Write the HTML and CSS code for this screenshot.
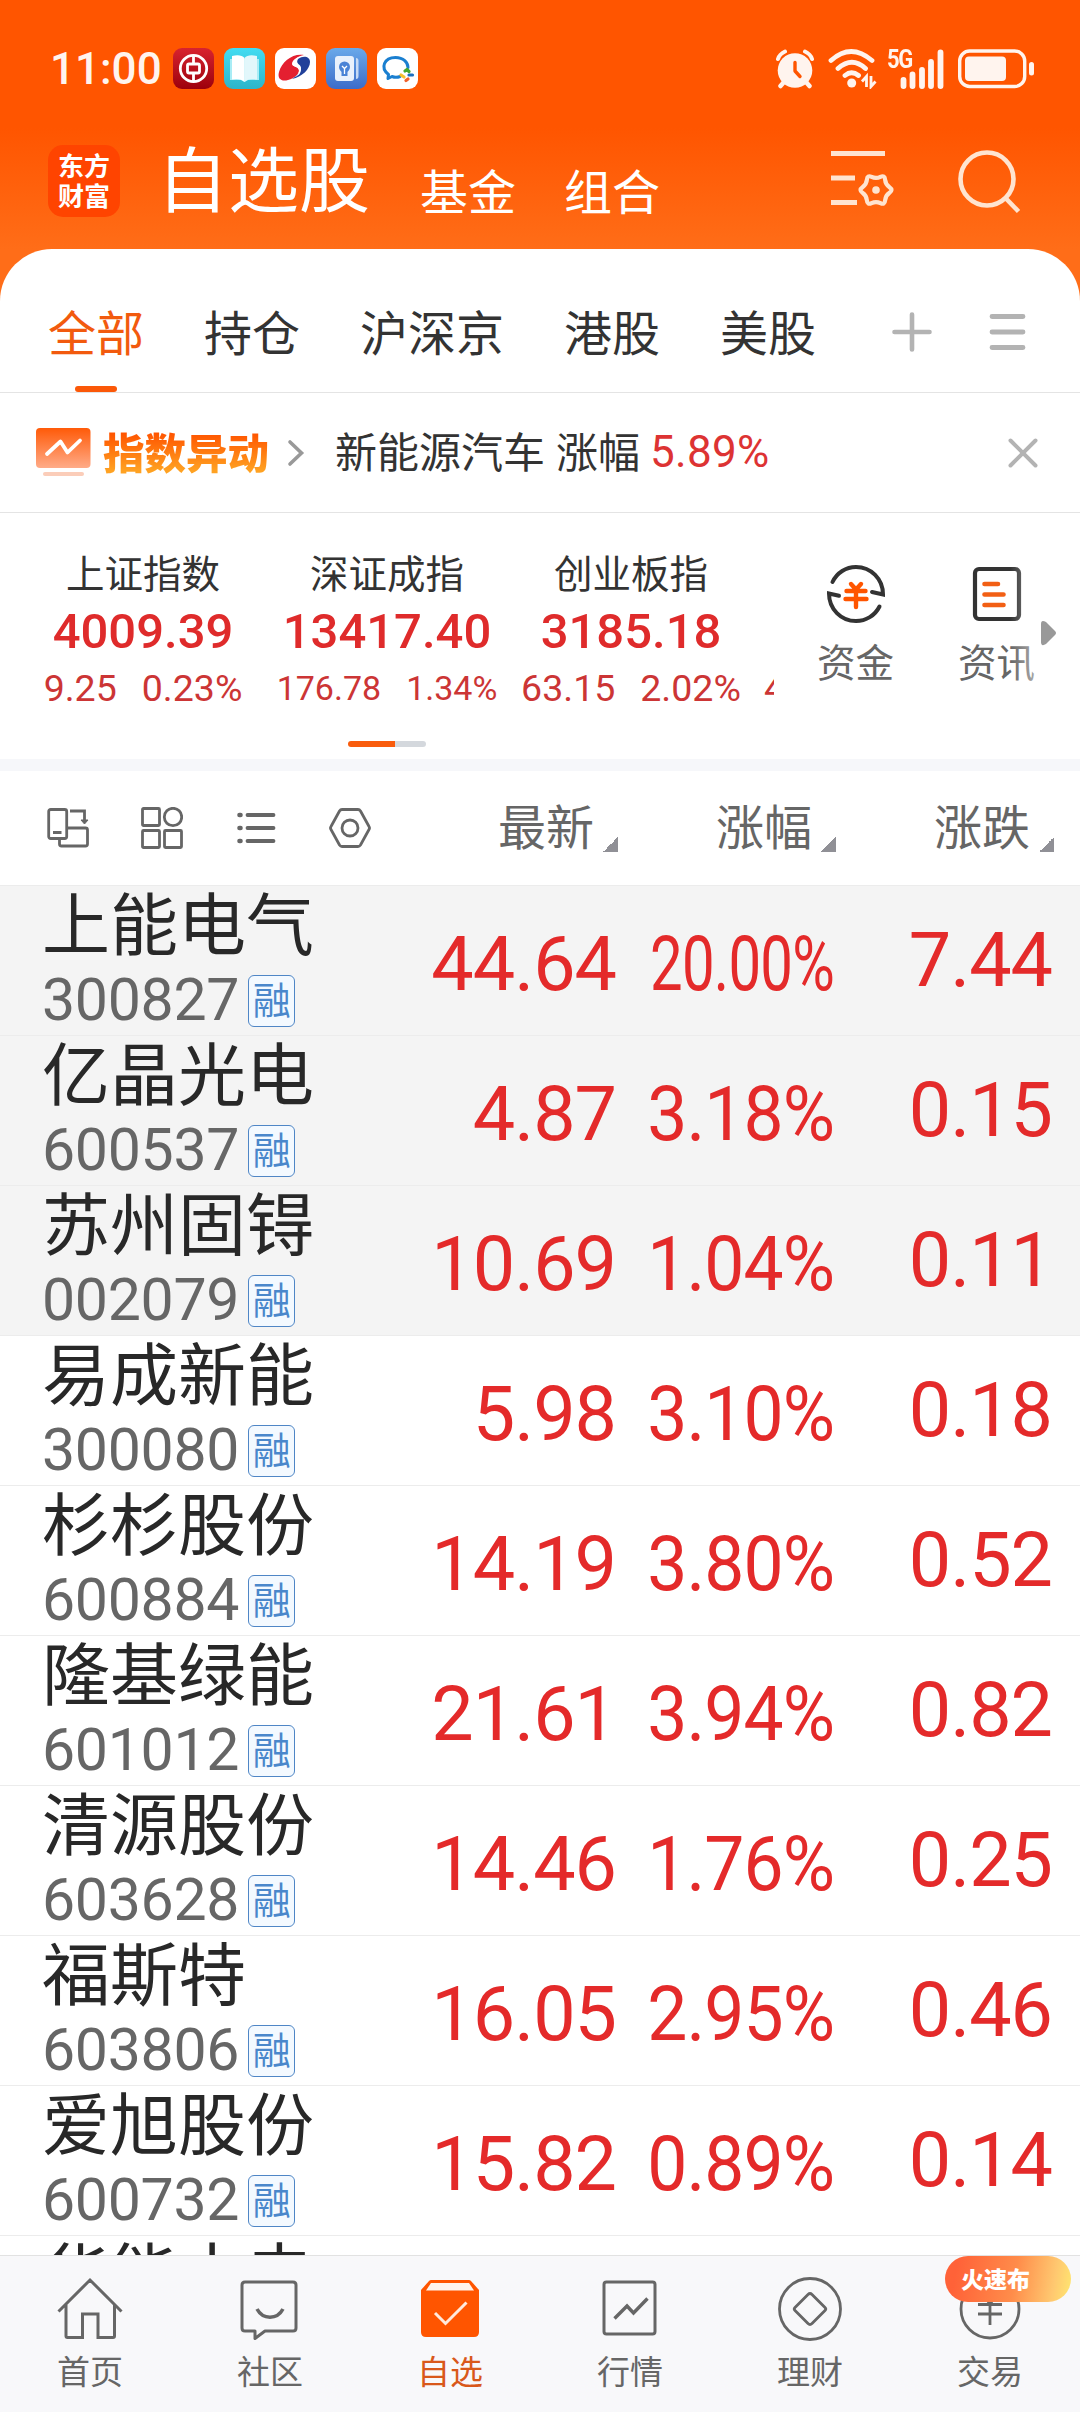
FILE: index.html
```
<!DOCTYPE html>
<html lang="zh-CN">
<head>
    <meta charset="UTF-8">
    <meta name="viewport" content="width=device-width, initial-scale=1.0">
    <title>自选股</title>
    <link rel="stylesheet" href="styles.css">
</head>
<body>

<div class="app">
    <header class="top">
        <div class="status">
            <span class="time">11:00</span>
            <div class="app-icons">
                <svg width="41" height="41" viewBox="0 0 41 41">
                    <defs><linearGradient id="boc" x1="0" y1="0" x2="0" y2="1"><stop offset="0" stop-color="#d8232f"/><stop offset="1" stop-color="#9c000c"/></linearGradient></defs>
                    <rect width="41" height="41" rx="9" fill="url(#boc)"/>
                    <g fill="none" stroke="#fff" stroke-width="2.8"><circle cx="20.5" cy="20.5" r="13.2"/><rect x="14.5" y="16" width="12" height="9" rx="1.5"/><path d="M20.5 7v9M20.5 25v9"/></g>
                </svg>
                <svg width="41" height="41" viewBox="0 0 41 41">
                    <defs><linearGradient id="book" x1="0" y1="0" x2="0" y2="1"><stop offset="0" stop-color="#43dcf2"/><stop offset="1" stop-color="#2db5c9"/></linearGradient></defs>
                    <rect width="41" height="41" rx="9" fill="url(#book)"/>
                    <path d="M6 11h29v21H24l-3.500 2-3.500-2H6z" fill="#a8ecf5"/>
                    <path d="M8 8q9-2 12.500 2v24q-4-4-12.500-2.500z" fill="#fff"/>
                    <path d="M33 8q-9-2-12.500 2v24q4-4 12.500-2.500z" fill="#e2f7fb"/>
                </svg>
                <svg width="41" height="41" viewBox="0 0 41 41">
                    <rect width="41" height="41" rx="9" fill="#fff"/>
                    <path d="M29 7C18 5 7 13 4 24c-2 7 3 10 9 8 7-2 11-6 11-10 0-4-7-3-7-6 0-4 6-8 12-9z" fill="#e41f30"/>
                    <path d="M23 11c6-4 12-2 12 3 0 7-8 15-18 17 5-3 9-7 9-11s-6-4-3-9z" fill="#21409a"/>
                    <path d="M24 9c-5 2-7 5-6 8 1 2 6 2 6 6 0 2-1 4-4 6 5-2 6-5 6-8 0-4-5-4-5-7 0-2 1-3 3-5z" fill="#fff"/>
                </svg>
                <svg width="41" height="41" viewBox="0 0 41 41">
                    <defs><linearGradient id="note" x1="0" y1="0" x2="0" y2="1"><stop offset="0" stop-color="#6aa9ea"/><stop offset="1" stop-color="#3c6cc9"/></linearGradient></defs>
                    <rect width="41" height="41" rx="9" fill="url(#note)"/>
                    <rect x="9" y="8" width="19" height="25" rx="3" fill="#e9f1fc"/>
                    <path d="M30 10q2.500 0 2.500 3v15q0 3-2.500 3z" fill="#c6daf5"/>
                    <circle cx="18.500" cy="19" r="5.500" fill="#4a83d6"/>
                    <path d="M15.500 23h6v5h-6z" fill="#4a83d6"/>
                    <path d="M16 18l2.500 2.500L21 18M18.500 20.500V26" fill="none" stroke="#fff" stroke-width="1.300"/>
                </svg>
                <svg width="41" height="41" viewBox="0 0 41 41">
                    <rect width="41" height="41" rx="9" fill="#fff"/>
                    <path d="M23 28.500q-4 1.500-8 0l-4 2 .5-4C3 20 7 9.500 18.500 9.500c8 0 12.500 5 12.500 10" fill="none" stroke="#1a7fd0" stroke-width="3" stroke-linecap="round" stroke-linejoin="round"/>
                    <g fill="none" stroke-width="3.200" stroke-linecap="round"><path d="M28 23l2-1.500 2 2" stroke="#45a82d"/><path d="M32 27l3.500 0" stroke="#1a6fc0"/><path d="M31 31l-2 1.500" stroke="#f0602a"/><path d="M27 29l-3-2" stroke="#f5c02c"/></g>
                </svg>
            </div>
            <div class="sys-icons">
                <svg width="38" height="40" viewBox="0 0 38 40">
                    <g fill="none" stroke="#fff4ee" stroke-linecap="round"><path d="M2 10q1.500-5 7-7.500M36 10q-1.500-5-7-7.500" stroke-width="4"/><path d="M8 33l-3.500 4M30 33l3.500 4" stroke-width="4.500"/></g>
                    <circle cx="19" cy="21.500" r="17.300" fill="#fff4ee"/>
                    <path d="M19 13.500v8.500l5 5.500" fill="none" stroke="#ff5500" stroke-width="3.400" stroke-linecap="round" stroke-linejoin="round"/>
                </svg>
                <svg class="wifi" width="50" height="40" viewBox="0 0 50 40">
                    <g fill="none" stroke="#fff4ee" stroke-width="4.800" stroke-linecap="round"><path d="M3 11.500q20-18 41 0M10 19.500q14-12.500 27.500 0M17 26.500q6.500-5.500 13.500 0"/></g>
                    <circle cx="23.700" cy="34" r="4.500" fill="#fff4ee"/>
                    <path d="M34 32.500l4.500-5V38M43 27v10.500l4.500-5" fill="none" stroke="#fff4ee" stroke-width="2.800"/>
                </svg>
                <div class="signal">
                    <span>5G</span>
                    <svg width="44" height="40" viewBox="0 0 44 40"><path d="M3.500 31v6M12.500 25.500V37M22 21v16M31 13v24M40.500 3.500V37" stroke="#fff4ee" stroke-width="5.800" stroke-linecap="round"/></svg>
                </div>
                <svg class="battery" width="77" height="40" viewBox="0 0 77 40">
                    <rect x="1.700" y="2" width="65" height="35.500" rx="10" fill="none" stroke="#fff4ee" stroke-width="3.400"/>
                    <rect x="7" y="7.500" width="41" height="24.500" rx="4" fill="#fff4ee"/>
                    <rect x="71" y="13" width="5" height="13.500" rx="2.500" fill="#fff4ee"/>
                </svg>
            </div>
        </div>
        <div class="title-bar">
            <div class="logo">东方<br>财富</div>
            <div class="title active">自选股</div>
            <div class="title">基金</div>
            <div class="title">组合</div>
            <div class="title-tools">
                <svg width="64" height="60" viewBox="0 0 64 60" fill="none" stroke="#ffe4d0" stroke-width="5">
                    <path d="M0 4.500h54M0 29h24M0 53.500h26"/>
                    <path d="M13.500-2.750Q17.500 0 13.500 2.750 9.500 5.500 9.100 10.300 8.750 15.200 4.400 13.100 0 11-4.400 13.100-8.750 15.200-9.100 10.300-9.500 5.500-13.500 2.750-17.500 0-13.500-2.750-9.500-5.500-9.100-10.300-8.750-15.200-4.400-13.100 0-11 4.400-13.100 8.750-15.200 9.100-10.300 9.500-5.500 13.500-2.750z" transform="translate(45 41)" stroke-width="4.200"/>
                    <circle cx="45" cy="41" r="3.800" fill="#ffe4d0" stroke="none"/>
                </svg>
                <svg width="66" height="66" viewBox="0 0 66 66" fill="none" stroke="#ffe4d0" stroke-width="4.600"><circle cx="30" cy="30" r="26.500"/><path d="M48 48.500l13.500 14"/></svg>
            </div>
        </div>
    </header>

    <main class="panel">
        <nav class="tabs">
            <a class="tab active">全部</a>
            <a class="tab">持仓</a>
            <a class="tab">沪深京</a>
            <a class="tab">港股</a>
            <a class="tab">美股</a>
            <svg class="plus" width="40" height="40" viewBox="0 0 40 40"><path d="M20 2.500v35M2.500 20h35" stroke="#b3b3b3" stroke-width="4.600" stroke-linecap="round"/></svg>
            <svg width="38" height="40" viewBox="0 0 38 40"><path d="M3 4.500h31M3 20h31M3 35.500h31" stroke="#b3b3b3" stroke-width="4.800" stroke-linecap="round"/></svg>
        </nav>

        <div class="notice">
            <svg width="56" height="50" viewBox="0 0 56 50">
                <defs><linearGradient id="chart" x1="0" y1="0" x2="0" y2="1"><stop offset="0" stop-color="#ff5a08"/><stop offset="1" stop-color="#ffab88"/></linearGradient></defs>
                <rect x="0" y="0" width="54.500" height="40" rx="4" fill="url(#chart)"/>
                <path d="M11 26l13.500-12.500 7 11L44 12.500" fill="none" stroke="#fff" stroke-width="3.800" stroke-linecap="round" stroke-linejoin="round"/>
                <rect x="7" y="44" width="41" height="4" rx="2" fill="#fbcdb9"/>
            </svg>
            <b class="notice-title">指数异动</b>
            <svg class="chevron" width="18" height="28" viewBox="0 0 18 28"><path d="M3 3l11.500 11L3 25" fill="none" stroke="#999" stroke-width="3.600" stroke-linecap="round"/></svg>
            <span class="notice-text">新能源汽车</span>
            <span class="notice-text">涨幅</span>
            <span class="notice-rate">5.89%</span>
            <svg class="close" width="30" height="30" viewBox="0 0 30 30"><path d="M2.500 2.500l25 25M27.500 2.500l-25 25" stroke="#b3b3b3" stroke-width="4" stroke-linecap="round"/></svg>
        </div>

        <section class="market">
            <div class="indexes">
                <div class="index">
                    <div class="index-name">上证指数</div>
                    <div class="index-value">4009.39</div>
                    <div class="index-diff"><span>9.25</span><span>0.23%</span></div>
                </div>
                <div class="index">
                    <div class="index-name">深证成指</div>
                    <div class="index-value">13417.40</div>
                    <div class="index-diff small"><span>176.78</span><span>1.34%</span></div>
                </div>
                <div class="index">
                    <div class="index-name">创业板指</div>
                    <div class="index-value">3185.18</div>
                    <div class="index-diff"><span>63.15</span><span>2.02%</span></div>
                </div>
                <div class="index next">
                    <div class="index-diff"><span>4</span></div>
                </div>
            </div>
            <div class="links">
                <div class="link">
                    <svg width="60" height="60" viewBox="0 0 60 60" fill="none" stroke-linecap="round">
                        <path d="M6.500 18C11 8.500 20 3 30 3c15 0 27 12 27 27.500l-11-2.500M53.500 42.500C49 51.500 40 57 30 57 15 57 3 45 3 29.500l10 2.200" stroke="#333" stroke-width="4"/>
                        <path d="M25 20l5 5.500L35 20M20.500 27h19M19.500 35h21M30 26v17" stroke="#ff5500" stroke-width="4.400"/>
                    </svg>
                    <span>资金</span>
                </div>
                <div class="link">
                    <svg width="60" height="60" viewBox="0 0 60 60" fill="none" stroke-linecap="round">
                        <rect x="8" y="5" width="44" height="50" rx="4" stroke="#333" stroke-width="4.200"/>
                        <path d="M17.500 20h13.500M17.500 30.500h19M17.500 41h19" stroke="#f25f14" stroke-width="4.600"/>
                    </svg>
                    <span>资讯</span>
                </div>
                <svg class="more" width="16" height="26" viewBox="0 0 16 26"><path d="M0 4q0-5 5-2l9 9q2 2 0 4l-9 9q-5 3-5-2z" fill="#999"/></svg>
            </div>
        </section>
        <div class="pager"><i></i></div>

        <div class="list-head">
            <div class="tools">
                <svg width="42" height="42" viewBox="0 0 42 42" fill="none" stroke="#666" stroke-width="2.800"><rect x="1.700" y="2.500" width="18" height="29" rx="2"/><path d="M6 25.500h8.500M23 4h14.500v11M12.500 32v5q0 2 2 2h24q2 0 2-2V23q0-2-2-2H20"/><path d="M34 13h7l-3.500 4z" fill="#666" stroke-width="1"/></svg>
                <svg width="42" height="42" viewBox="0 0 42 42" fill="none" stroke="#666" stroke-width="2.800"><rect x="1.500" y="1.500" width="17" height="17" rx="1"/><circle cx="32" cy="10" r="8.700"/><rect x="1.500" y="23.500" width="17" height="17" rx="1"/><rect x="23.500" y="23.500" width="17" height="17" rx="1"/></svg>
                <svg width="42" height="42" viewBox="0 0 42 42" stroke="#666" stroke-width="3.800" stroke-linecap="round"><path d="M12.500 8h26M12.500 21h26M12.500 34h26"/><path d="M4.500 8h1M4.500 21h1M4.500 34h1" stroke-width="4.600"/></svg>
                <svg width="42" height="42" viewBox="0 0 42 42" fill="none" stroke="#666" stroke-width="2.800"><path d="M13 2.500h16q1.500 0 2.500 1.500l8.500 15.500q1 1.500 0 3L31.500 38q-1 1.500-2.500 1.500H13q-1.500 0-2.500-1.500L2 22.500q-1-1.500 0-3L10.500 4q1-1.500 2.500-1.500z"/><circle cx="21" cy="21" r="8"/></svg>
            </div>
            <div class="sort">最新<i></i></div>
            <div class="sort">涨幅<i></i></div>
            <div class="sort">涨跌<i></i></div>
        </div>

        <div class="stocks">
            <div class="stock pinned">
                <div class="stock-info"><div class="name">上能电气</div><div class="code"><span>300827</span><em>融</em></div></div>
                <div class="price">44.64</div><div class="rate narrow">20.00%</div><div class="change">7.44</div>
            </div>
            <div class="stock pinned">
                <div class="stock-info"><div class="name">亿晶光电</div><div class="code"><span>600537</span><em>融</em></div></div>
                <div class="price">4.87</div><div class="rate">3.18%</div><div class="change">0.15</div>
            </div>
            <div class="stock pinned">
                <div class="stock-info"><div class="name">苏州固锝</div><div class="code"><span>002079</span><em>融</em></div></div>
                <div class="price">10.69</div><div class="rate">1.04%</div><div class="change">0.11</div>
            </div>
            <div class="stock">
                <div class="stock-info"><div class="name">易成新能</div><div class="code"><span>300080</span><em>融</em></div></div>
                <div class="price">5.98</div><div class="rate">3.10%</div><div class="change">0.18</div>
            </div>
            <div class="stock">
                <div class="stock-info"><div class="name">杉杉股份</div><div class="code"><span>600884</span><em>融</em></div></div>
                <div class="price">14.19</div><div class="rate">3.80%</div><div class="change">0.52</div>
            </div>
            <div class="stock">
                <div class="stock-info"><div class="name">隆基绿能</div><div class="code"><span>601012</span><em>融</em></div></div>
                <div class="price">21.61</div><div class="rate">3.94%</div><div class="change">0.82</div>
            </div>
            <div class="stock">
                <div class="stock-info"><div class="name">清源股份</div><div class="code"><span>603628</span><em>融</em></div></div>
                <div class="price">14.46</div><div class="rate">1.76%</div><div class="change">0.25</div>
            </div>
            <div class="stock">
                <div class="stock-info"><div class="name">福斯特</div><div class="code"><span>603806</span><em>融</em></div></div>
                <div class="price">16.05</div><div class="rate">2.95%</div><div class="change">0.46</div>
            </div>
            <div class="stock">
                <div class="stock-info"><div class="name">爱旭股份</div><div class="code"><span>600732</span><em>融</em></div></div>
                <div class="price">15.82</div><div class="rate">0.89%</div><div class="change">0.14</div>
            </div>
            <div class="stock">
                <div class="stock-info"><div class="name">华能水电</div></div>
            </div>
        </div>
    </main>

    <footer class="nav">
        <a class="nav-item">
            <svg width="66" height="66" viewBox="0 0 66 66" fill="none" stroke="#666" stroke-width="3"><path d="M1.500 35.500L33 4l31.500 31.500M9 28.500V60q0 1.500 1.500 1.500h15V38h15.500v23.500h15q1.500 0 1.500-1.500V28.500"/></svg>
            <span>首页</span>
        </a>
        <a class="nav-item">
            <svg width="66" height="66" viewBox="0 0 66 66" fill="none" stroke="#666" stroke-width="3"><path d="M8 6h48q3 0 3 3v43q0 3-3 3H28l-10 7.500V55H8q-3 0-3-3V9q0-3 3-3z" stroke-linejoin="round"/><path d="M20 33c6 11 20 11 26 0" stroke-width="3.600"/></svg>
            <span>社区</span>
        </a>
        <a class="nav-item active">
            <svg width="66" height="66" viewBox="0 0 66 66"><path d="M4 14L12 5q1-1 2-1h38q1 0 2 1l8 9v42q0 5-5 5H9q-5 0-5-5z" fill="#ff5500"/><path d="M14 7h38l5 7.500H9z" fill="#fff4ec"/><path d="M18 37l10.500 10.500L49.500 26.500" fill="none" stroke="#ffe9dc" stroke-width="3"/></svg>
            <span>自选</span>
        </a>
        <a class="nav-item">
            <svg width="66" height="66" viewBox="0 0 66 66" fill="none" stroke="#666" stroke-width="3"><rect x="7" y="6" width="51" height="52" rx="2.500"/><path d="M17.500 42.500L30 30l6.500 7L50.500 22.500" stroke-width="3.400"/></svg>
            <span>行情</span>
        </a>
        <a class="nav-item">
            <svg width="66" height="66" viewBox="0 0 66 66" fill="none" stroke="#666" stroke-width="2.800"><circle cx="33" cy="33" r="30.500"/><path d="M31 18.500q2-2 4 0l13 13q1.500 1.500 0 3l-13 13q-2 2-4 0l-13-13q-1.500-1.500 0-3z"/></svg>
            <span>理财</span>
        </a>
        <a class="nav-item">
            <svg width="66" height="66" viewBox="0 0 66 66" fill="none" stroke="#666" stroke-width="2.800"><circle cx="33" cy="33" r="29"/><path d="M25 17l8 11 8-11M21 28.500h24M21 38h24M33 27v22"/></svg>
            <span>交易</span>
            <b class="badge">火速布</b>
        </a>
    </footer>
</div>

</body>
</html>
```
FILE: styles.css
```
* {
    box-sizing: border-box;
}

body {
    margin: 0;
    font-family: "Noto Sans CJK SC", sans-serif;
    color: #333;
    background: #fff;
}

svg {
    display: block;
    flex: none;
}

i, em {
    font-style: normal;
}

.app {
    width: 1080px;
    height: 2412px;
    display: flex;
    flex-direction: column;
    overflow: hidden;
    background: #ff6d18;
}

/* header */
.top {
    flex: none;
    height: 249px;
    background: linear-gradient(#ff5500 0, #ff5500 128px, #ff6d18 249px);
}

.status {
    display: flex;
    align-items: center;
    height: 96px;
    padding: 41px 45px 0 50px;
    color: #fff4ee;
}

.time {
    width: 123px;
    font: 500 44px/50px Roboto, sans-serif;
}

.app-icons {
    display: flex;
    gap: 10px;
}

.sys-icons {
    display: flex;
    margin-left: auto;
}

.wifi {
    margin-left: 14px;
}

.signal {
    position: relative;
    margin-left: 22px;
}

.signal span {
    position: absolute;
    left: -13px;
    top: -2px;
    font: 700 25px/26px Roboto, sans-serif;
    letter-spacing: -1.5px;
    transform: scaleX(.88);
    transform-origin: left;
}

.battery {
    margin-left: 14px;
}

.title-bar {
    display: flex;
    height: 121px;
    padding: 0 57px 0 48px;
    margin-top: 32px;
    align-items: flex-end;
    color: #fff;
}

.logo {
    width: 72px;
    height: 72px;
    margin: 0 37px 32px 0;
    padding-top: 5px;
    border-radius: 15px;
    background: #ff4400;
    font-size: 26px;
    line-height: 30px;
    font-weight: 700;
    text-align: center;
}

.title {
    margin-right: 48px;
    margin-bottom: 30px;
    font-size: 48px;
    line-height: 60px;
}

.title.active {
    margin-bottom: 29px;
    margin-right: 50px;
    font-size: 71px;
    line-height: 90px;
}

.title-tools {
    display: flex;
    gap: 62px;
    margin-left: auto;
    margin-bottom: 34px;
}

/* white panel */
.panel {
    flex: 1;
    min-height: 0;
    display: flex;
    flex-direction: column;
    overflow: hidden;
    background: #fff;
    border-radius: 52px 52px 0 0;
}

.tabs {
    flex: none;
    display: flex;
    align-items: center;
    gap: 60px;
    height: 144px;
    padding: 0 53px 0 48px;
    border-bottom: 1px solid #e4e4e4;
    font-size: 48px;
}

.tab {
    display: flex;
    flex-direction: column;
    align-items: center;
    height: 143px;
    line-height: 162px;
}

.tab.active {
    color: #f25a0e;
}

.tab.active::after {
    content: "";
    flex: none;
    width: 42px;
    height: 6px;
    margin-top: -25px;
    border-radius: 3px;
    background: #fb5808;
}

.plus {
    margin-left: auto;
}

.tabs svg {
    margin-top: 23px;
}

.tabs svg:last-child {
    margin-left: -3px;
}

.notice {
    flex: none;
    display: flex;
    align-items: center;
    height: 120px;
    padding: 0 42px 0 36px;
    border-bottom: 1px solid #e4e4e4;
}

.notice-title {
    margin-left: 11px;
    margin-top: -4px;
    font-size: 41.500px;
    font-weight: 900;
    line-height: 50px;
    background: linear-gradient(#ff5500 15%, #ffa222 90%);
    -webkit-background-clip: text;
    background-clip: text;
    color: transparent;
}

.chevron {
    margin: 0 30px 0 18px;
}

.notice-text {
    margin-right: 11px;
    margin-top: -5px;
    font-size: 42px;
    line-height: 50px;
}

.notice-rate {
    margin-left: -1px;
    margin-top: -2px;
    font: 44px/50px Roboto, sans-serif;
    letter-spacing: .3px;
    color: #d33;
}

.close {
    margin-left: auto;
}

.market {
    flex: none;
    display: flex;
    height: 228px;
}

.indexes {
    display: flex;
    width: 774px;
    padding-left: 21px;
    overflow: hidden;
}

.index {
    flex: none;
    width: 244px;
    padding-top: 32px;
    text-align: center;
    white-space: nowrap;
}

.index-name {
    font-size: 38.500px;
    line-height: 52px;
}

.index-value {
    margin-top: 7px;
    font: 500 49px/56px Roboto, sans-serif;
    color: #df2b2b;
}

.index-diff {
    display: flex;
    justify-content: center;
    gap: 25px;
    margin: 6px -10px 0;
    font: 37.500px/44px Roboto, sans-serif;
    color: #cc3535;
}

.index-diff.small {
    font-size: 34px;
    line-height: 45px;
}

.index.next {
    padding: 147px 0 0 21px;
}

.index.next .index-diff {
    justify-content: flex-start;
}

.links {
    flex: 1;
    position: relative;
    display: flex;
    padding: 51px 0 0 11px;
}

.link {
    width: 141px;
    display: flex;
    flex-direction: column;
    align-items: center;
    font-size: 38.500px;
    line-height: 52px;
    color: #666;
}

.link span {
    margin-top: 10px;
}

/* fades the last link out under the arrow */
.links::after {
    content: "";
    position: absolute;
    left: 236px;
    top: 40px;
    width: 40px;
    height: 160px;
    background: linear-gradient(to right, rgba(255, 255, 255, 0), rgba(255, 255, 255, .7));
}

.more {
    position: absolute;
    left: 267px;
    top: 107px;
    z-index: 1;
}

.pager {
    flex: none;
    height: 18px;
    margin-left: 348px;
}

.pager i {
    display: block;
    width: 78px;
    height: 6px;
    border-radius: 3px;
    background: linear-gradient(to right, #f95c0d 47px, #d4d8dd 47px);
}

/* watch list */
.list-head {
    flex: none;
    display: flex;
    align-items: center;
    height: 126px;
    padding-right: 26px;
    border-top: 12px solid #f6f7fa;
    color: #666;
}

.tools {
    display: flex;
    gap: 52px;
    width: 400px;
    padding-left: 47px;
}

.sort {
    display: flex;
    align-items: center;
    justify-content: flex-end;
    width: 218px;
    font-size: 48px;
    line-height: 60px;
    margin-top: -9px;
}

.sort i {
    width: 15px;
    height: 15px;
    margin: 41px 0 0 9px;
    background: linear-gradient(135deg, transparent 50%, #909096 50%);
}

.stocks {
    flex: 1;
    min-height: 0;
    overflow: hidden;
}

.stock {
    display: flex;
    align-items: center;
    height: 150px;
    padding-right: 28px;
    border-top: 1px solid #ececec;
    background: #fff;
}

.stock.pinned {
    background: #f4f4f4;
}

.stock-info {
    width: 398px;
    height: 149px;
    padding-left: 42px;
}

.name {
    height: 89px;
    font-size: 68px;
    line-height: 70px;
    color: #282828;
}

.code {
    display: flex;
    font: 59px/49px Roboto, sans-serif;
    letter-spacing: -.3px;
    color: #666;
}

.code span {
    width: 206px;
}

.code em {
    width: 47px;
    height: 52px;
    border: 1px solid #4f86c6;
    border-radius: 6px;
    background: #f3f9ff;
    font: 38px/44px "Noto Sans CJK SC", sans-serif;
    text-align: center;
    color: #4a87cb;
}

.price, .rate, .change {
    width: 218px;
    font: 75.500px/90px Roboto, sans-serif;
    letter-spacing: -1px;
    text-align: right;
    color: #e42a2a;
}

.price {
    padding-top: 6px;
}

.rate {
    padding-top: 6px;
    transform: scaleX(.945);
    transform-origin: right;
}

.rate.narrow {
    display: flex;
    justify-content: flex-end;
    transform: scaleX(.77);
}

.change {
    margin-top: -2px;
}

/* bottom navigation */
.nav {
    flex: none;
    display: flex;
    height: 157px;
    border-top: 1px solid #e2e2e2;
    background: #f8f8fa;
}

.nav-item {
    position: relative;
    width: 180px;
    display: flex;
    flex-direction: column;
    align-items: center;
    padding-top: 20px;
    font-size: 33px;
    line-height: 44px;
    color: #666;
}

.nav-item span {
    margin-top: 6px;
}

.nav-item.active {
    color: #d9581a;
}

.badge {
    position: absolute;
    left: 45px;
    top: 0;
    width: 126px;
    height: 46px;
    padding-left: 16px;
    border-radius: 23px;
    background: linear-gradient(100deg, #ff6238 10%, #ff8c4a 55%, #ffc870 85%, #ffe870 100%);
    font-size: 23px;
    font-weight: 900;
    line-height: 44px;
    color: #fff;
}
```
